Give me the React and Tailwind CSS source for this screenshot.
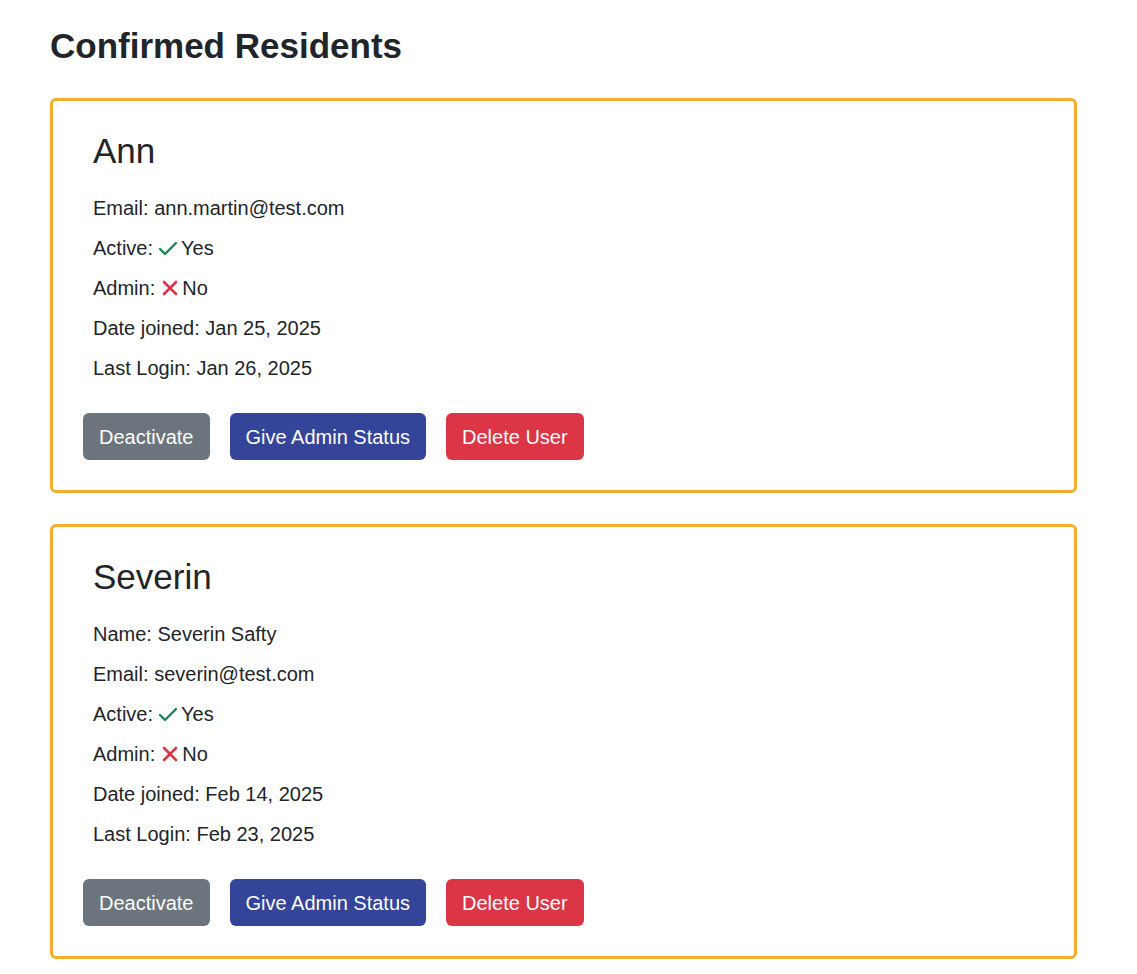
import React from 'react';

const residents = [
    {
        id: 1,
        title: 'Ann',
        fields: [['Email', 'ann.martin@test.com']],
        active: true,
        admin: false,
        joined: 'Jan 25, 2025',
        lastLogin: 'Jan 26, 2025',
    },
    {
        id: 2,
        title: 'Severin',
        fields: [
            ['Name', 'Severin Safty'],
            ['Email', 'severin@test.com'],
        ],
        active: true,
        admin: false,
        joined: 'Feb 14, 2025',
        lastLogin: 'Feb 23, 2025',
    },
];

const CheckIcon = () => (
    <svg width="16" height="13" viewBox="4 5 16 13" overflow="visible" fill="none" stroke="#198754" strokeWidth="2.4" strokeLinecap="round" strokeLinejoin="round">
        <path d="M20 6 9 17l-5-5" />
    </svg>
);

const CrossIcon = () => (
    <svg width="12" height="12" viewBox="6 6 12 12" overflow="visible" fill="none" stroke="#dc3545" strokeWidth="2.6" strokeLinecap="round">
        <path d="M18 6 6 18" />
        <path d="m6 6 12 12" />
    </svg>
);

const Flag = ({ label, on }) => (
    <p className="flex items-center h-[30px]">
        <span>{label}:</span>
        <span className={on ? 'ml-[7px] mr-[5px] flex items-center' : 'ml-[9px] mr-[6px] flex items-center'}>
            {on ? <CheckIcon /> : <CrossIcon />}
        </span>
        <span>{on ? 'Yes' : 'No'}</span>
    </p>
);

const ResidentCard = ({ r }) => (
    <div className="border-[3px] border-[#f6ad2b] rounded-[6px] pt-[29px] pb-[30px] px-[30px]">
        <h2 className="pl-[10px] text-[35px] leading-[42px] font-normal">{r.title}</h2>
        <div className="mt-[21px] pl-[10px] flex flex-col gap-[10px] text-[20px] leading-[30px]">
            {r.fields.map(([k, v]) => (
                <p key={k} className="h-[30px]">{k}: {v}</p>
            ))}
            <Flag label="Active" on={r.active} />
            <Flag label="Admin" on={r.admin} />
            <p className="h-[30px]">Date joined: {r.joined}</p>
            <p className="h-[30px]">Last Login: {r.lastLogin}</p>
        </div>
        <div className="mt-[30px] flex gap-[20px] text-[20px] leading-[30px] text-white">
            <button className="h-[47px] px-[16px] rounded-[6px] bg-[#6c757d]">Deactivate</button>
            <button className="h-[47px] px-[16px] rounded-[6px] bg-[#334499]">Give Admin Status</button>
            <button className="h-[47px] px-[16px] rounded-[6px] bg-[#dc3545]">Delete User</button>
        </div>
    </div>
);

export default function App() {
    return (
        <div className="min-h-screen bg-white text-[#212529] pt-[25px] pl-[50px]" style={{ fontFamily: '"Liberation Sans", Arial, sans-serif' }}>
            <h1 className="text-[35px] leading-[42px] font-bold">Confirmed Residents</h1>

            {/* cards */}
            <div className="mt-[31px] w-[1027px] flex flex-col gap-[31px]">
                {residents.map((r) => (
                    <ResidentCard key={r.id} r={r} />
                ))}
            </div>
        </div>
    );
}
